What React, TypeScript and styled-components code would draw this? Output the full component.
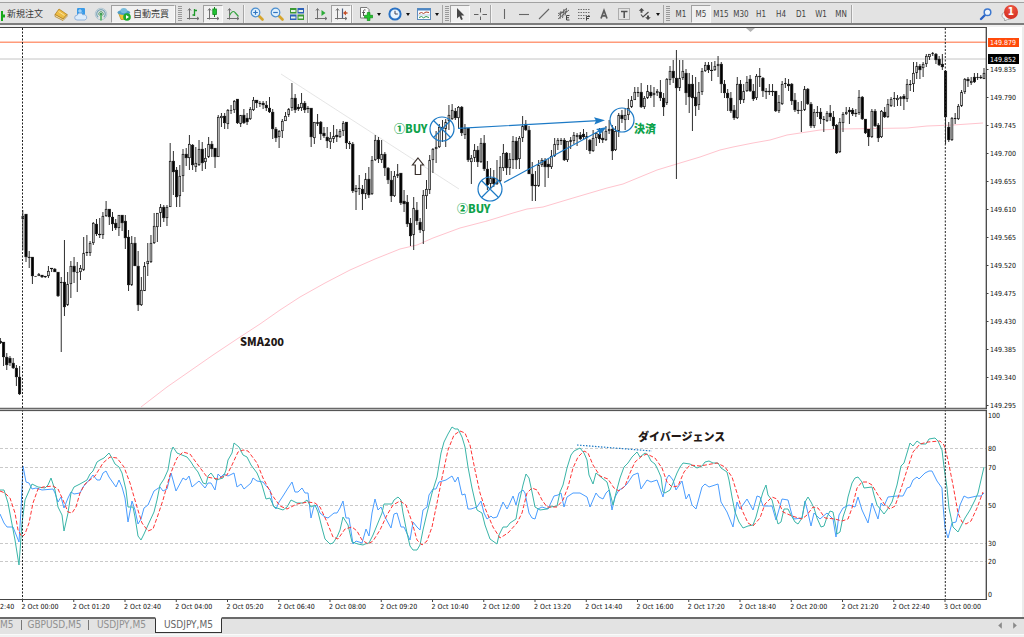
import React from "react";
import styled, { createGlobalStyle } from "styled-components";

const GlobalStyle = createGlobalStyle`
  *, *::before, *::after { box-sizing: border-box; }
  body {
    margin: 0;
    background: #f1f1f1;
    font-family: "DejaVu Sans Condensed", "DejaVu Sans", "Noto Sans CJK JP", sans-serif;
    color: #333;
  }
`;

const Window = styled.div`
  display: flex;
  flex-direction: column;
  min-width: 880px;
`;

const Toolbar = styled.header`
  display: flex;
  align-items: stretch;
  height: 25px;
  margin-bottom: 2px;
  border-top: 2px solid #ececec;
  border-bottom: 2px solid #7d7d7d;
  background: #e3e3e3;
  box-shadow: inset 0 1px 0 #a2a2a2;
  padding-top: 3px;
`;

const ToolButton = styled.button<{ $pressed?: boolean; $width?: number }>`
  display: flex;
  align-items: center;
  justify-content: center;
  gap: 2px;
  flex: none;
  width: ${(p) => p.$width ?? 20}px;
  padding: 0;
  border: 1px solid transparent;
  border-color: ${(p) => (p.$pressed ? "#a0a0a0 #fafafa #fafafa #a0a0a0" : "transparent")};
  background: ${(p) => (p.$pressed ? "#f1f1f1" : "transparent")};
  font-family: inherit;
  font-size: 8px;
  line-height: 10px;
  color: #444;
  svg { flex: none; display: block; }
`;

const MenuButton = styled(ToolButton)`
  width: 29px;
  gap: 4px;
`;

const FrameButton = styled(ToolButton)`
  padding-top: 2px;
`;

const TextButton = styled(ToolButton)`
  font-family: "Noto Sans CJK JP", sans-serif;
  font-size: 9px;
  line-height: 12px;
  white-space: nowrap;
  color: #3c3c3c;
`;

const OrderButton = styled(TextButton)`
  justify-content: flex-start;
`;

const Divider = styled.span`
  flex: none;
  width: 4px;
  border-left: 1px solid #a6a6a6;
  box-shadow: inset 1px 0 0 #f4f4f4;
`;

const Grip = styled.span`
  flex: none;
  width: 8px;
  border-left: 1px solid #a6a6a6;
  padding: 1px 1px 1px 2px;
  &::before {
    content: "";
    display: block;
    width: 4px;
    height: 100%;
    background: repeating-linear-gradient(#9a9a9a 0 1px, #e3e3e3 1px 2px);
  }
`;

const Caret = styled.span`
  border: 2px solid transparent;
  border-top: 3px solid #111;
  border-bottom-width: 0;
`;

const Spacer = styled.span`
  flex: 1;
`;

const AlertButton = styled(ToolButton)`
  position: relative;
  margin-right: 4px;
`;

const AlertCount = styled.span`
  position: absolute;
  top: -1px;
  right: 1px;
  width: 14px;
  height: 14px;
  border-radius: 50%;
  background: radial-gradient(circle at 50% 25%, #ee5a45, #cf2418);
  color: #fff;
  font-size: 10px;
  font-weight: 700;
  line-height: 14px;
  text-align: center;
`;

const ChartArea = styled.main`
  background: #fff;
  border-right: 2px solid #ececec;
`;

const ChartSvg = styled.svg`
  display: block;
  width: 100%;
  height: auto;
`;

const AxisText = styled.text<{ $light?: boolean }>`
  font-size: 7px;
  fill: ${(p) => (p.$light ? "#fff" : "#111")};
`;

const Note = styled.text<{ $green?: boolean }>`
  font-family: "Noto Sans CJK JP", sans-serif;
  font-size: 11px;
  font-weight: 900;
  fill: ${(p) => (p.$green ? "#0ea24b" : "#231815")};
`;

const TabBar = styled.nav`
  display: flex;
  height: 18px;
  border-bottom: 1px solid #fafafa;
  background: #e3e3e3;
`;

const Tab = styled.button<{ $active?: boolean; $short?: boolean }>`
  flex: none;
  width: ${(p) => (p.$short ? 21 : 67)}px;
  height: 16px;
  padding: 0 0 2px;
  border: 0 solid #333;
  border-top: 2px solid #6a6a6a;
  border-top-color: ${(p) => (p.$active ? "#fff" : "#6a6a6a")};
  border-width: ${(p) => (p.$active ? "2px 1px 1px 1px" : "2px 0 0 0")};
  background: ${(p) => (p.$active ? "#fff" : "transparent")};
  color: ${(p) => (p.$active ? "#666" : "#909090")};
  font-family: inherit;
  font-size: 10px;
  line-height: 10px;
  text-align: ${(p) => (p.$short ? "left" : "center")};
`;

const TabRule = styled.span`
  width: 1px;
  margin: 0 -1px 0 0;
  border-top: 2px solid #6a6a6a;
  &::before {
    content: "";
    display: block;
    width: 1px;
    height: 10px;
    margin-top: 1px;
    background: #777;
  }
`;

const TabFill = styled.span`
  flex: 1;
  border-top: 2px solid #6a6a6a;
`;

const ScrollButtons = styled.div`
  display: flex;
  align-items: center;
  gap: 9px;
  padding: 0 6px 2px 0;
  border-top: 2px solid #6a6a6a;
`;

const ScrollButton = styled.button<{ $right?: boolean }>`
  width: 6px;
  height: 8px;
  padding: 0;
  border: 0;
  background: #8a8a8a;
  clip-path: ${(p) =>
    p.$right ? "polygon(20% 10%, 80% 50%, 20% 90%)" : "polygon(80% 10%, 20% 50%, 80% 90%)"};
`;

/* ---------- icons ---------- */

type IconProps = { children: React.ReactNode; w?: number };
const Icon = ({ children, w = 14 }: IconProps) => (
  <svg width={w} height={14} viewBox={`0 0 ${w} 14`} fill="none" aria-hidden="true">
    {children}
  </svg>
);

const AXES = "M3.5 2v10.500M1 11.500h12M2 3.500l1.500-2 1.500 2M11 10l2 1.500-2 1.500";

const PlusIcon = () => (
  <Icon w={4}>
    <path d="M-2 7.500h2V4h2v3.500h2v3H2V14H0v-3.500h-2z" fill="#18a818" />
  </Icon>
);
const BookIcon = () => (
  <Icon>
    <path d="M1 7.500 5 2l8 5.500-4 4.500z" fill="#edbd45" stroke="#b88420" strokeWidth=".8" />
    <path d="M1 7.500 9 12l4-4.500v1.800L9 13.500 1 9.500z" fill="#f8e7b0" stroke="#a87618" strokeWidth=".7" />
    <path d="m4.500 4.500 6 4" stroke="#fae29a" />
  </Icon>
);
const CloudIcon = () => (
  <Icon>
    <rect x="3" y="1" width="8" height="8" rx="1" fill="#3a9be8" />
    <path d="M5 3h2v2H5zM8 5.500 6 8" stroke="#d8efff" strokeWidth=".8" />
    <path d="M3 13a2.400 2.400 0 0 1 .2-4.800 3 3 0 0 1 5.600-.4A2.700 2.700 0 1 1 11 13z" fill="#dcebfa" stroke="#7fa6d6" strokeWidth=".8" />
  </Icon>
);
const SignalIcon = () => (
  <Icon>
    <circle cx="7" cy="7" r="5.800" stroke="#b4c9d4" strokeWidth="1" />
    <path d="M4.200 10.200a4.300 4.300 0 1 1 5.600 0" stroke="#7aa6b8" strokeWidth="1.200" />
    <path d="M5.500 8.500a2.200 2.200 0 1 1 3 0" stroke="#53a070" />
    <circle cx="7" cy="7" r="1.200" fill="#3c9c50" />
    <path d="M7 8v5.500" stroke="#4fb25a" strokeWidth="1.600" />
  </Icon>
);
const ExpertIcon = () => (
  <Icon>
    <path d="M1.500 6h10.500l-2 6.500H4z" fill="#f2c433" stroke="#b98f1e" strokeWidth=".7" />
    <ellipse cx="6.800" cy="5.500" rx="6.300" ry="2.500" fill="#4f9fc9" />
    <ellipse cx="6.800" cy="3.600" rx="3.300" ry="2.600" fill="#79bddd" />
    <circle cx="10" cy="10" r="3.800" fill="#1eaa2c" />
    <path d="M9 8v4l3-2z" fill="#fff" />
  </Icon>
);
const BarsIcon = () => (
  <Icon>
    <path d={AXES} stroke="#707070" />
    <path d="M8.500 2v7M8.500 3.500H11M6.500 8h2" stroke="#1e9a2a" strokeWidth="1.300" />
  </Icon>
);
const CandlesIcon = () => (
  <Icon>
    <path d={AXES} stroke="#707070" />
    <path d="M8.500 0v10" stroke="#12801c" />
    <rect x="6.800" y="2" width="3.600" height="5.500" fill="#20c232" stroke="#128a1e" strokeWidth=".8" />
  </Icon>
);
const LineIcon = () => (
  <Icon>
    <path d={AXES} stroke="#707070" />
    <path d="M3.500 8.500c2-4 4-5 5.500-3l3.500 4" stroke="#3aa544" strokeWidth="1.200" />
  </Icon>
);
const ZoomIcon = ({ plus }: { plus?: boolean }) => (
  <Icon>
    <path d="m8.500 8.500 4 4" stroke="#d6a52e" strokeWidth="2.600" strokeLinecap="round" />
    <circle cx="5.500" cy="5.500" r="4.300" fill="#dff0fc" stroke="#4b8fd0" strokeWidth="1.200" />
    <path d={plus ? "M3.200 5.500h4.600M5.500 3.200v4.600" : "M3.200 5.500h4.600"} stroke="#2f74c0" strokeWidth="1.200" />
  </Icon>
);
const TilesIcon = () => (
  <Icon>
    <rect x="0" y="1" width="6.500" height="5.500" fill="#3c9a34" />
    <rect x="7.500" y="1" width="6.500" height="5.500" fill="#2d62b8" />
    <rect x="0" y="7.500" width="6.500" height="5.500" fill="#2d62b8" />
    <rect x="7.500" y="7.500" width="6.500" height="5.500" fill="#3c9a34" />
    <path d="M1 4h4.500M8.500 4H13M1 10.500h4.500M8.500 10.500H13" stroke="#e8f3e6" strokeWidth="1.800" />
  </Icon>
);
const ScrollIcon = () => (
  <Icon>
    <path d={AXES} stroke="#707070" />
    <path d="m7.500 3 4 3-4 3z" fill="#2cac38" />
  </Icon>
);
const ShiftIcon = () => (
  <Icon>
    <path d={AXES} stroke="#707070" />
    <path d="M8.500 1.500V11" stroke="#4d5f80" strokeWidth="1.200" />
    <path d="M13.500 6h-2" stroke="#c4512c" strokeWidth="1.500" />
    <path d="m9 6 3-2.500v5z" fill="#c4512c" />
  </Icon>
);
const IndicatorIcon = () => (
  <Icon>
    <path d="M1.500.500h6.500l2 2v8.500H1.500z" fill="#fafafa" stroke="#7a7a7a" />
    <path d="M6.500 3c-1.500-.5-2 0-2 1.500v4.500M3.200 5.500h2.800" stroke="#555" />
    <path d="M8.300 5.500h2.600v2.800h2.800v2.500h-2.800v2.900H8.300v-2.900H5.500V8.300h2.800z" fill="#22c52c" stroke="#128a1a" strokeWidth=".7" />
  </Icon>
);
const ClockIcon = () => (
  <Icon>
    <circle cx="7" cy="7" r="5.600" fill="#eaf4fd" stroke="#2a72c4" strokeWidth="2" />
    <path d="M7 3.800V7h2.800" stroke="#445" />
  </Icon>
);
const TemplateIcon = () => (
  <Icon>
    <rect x=".5" y="1.500" width="13" height="11" fill="#fbfdff" stroke="#5f8dbe" />
    <path d="M.5 2.500h13" stroke="#4d86c4" strokeWidth="2" />
    <path d="m2 6.500 2.500-1 2 1 2.500-1.500 3 .5" stroke="#b0452f" />
    <path d="M1 8h12" stroke="#9dbbd8" strokeWidth=".7" />
    <path d="m2 10.500 2.500-1 2 1.300L9 9.500l3 1" stroke="#35974a" />
  </Icon>
);
const CursorIcon = () => (
  <Icon>
    <path d="M4 1v10.500l2.400-2.300 1.700 3.800 1.700-.8L8.200 8.600h3.200z" fill="#474747" />
  </Icon>
);
const CrosshairIcon = () => (
  <Icon>
    <path d="M7.500 1v4.500M7.500 9.500V13M1 7.500h4.500M9.500 7.500H14" stroke="#606060" />
  </Icon>
);
const Stroke = ({ d }: { d: string }) => (
  <Icon>
    <path d={d} stroke="#666" strokeWidth="1.100" />
  </Icon>
);
const PitchforkIcon = () => (
  <Icon>
    <path d="m1 9 9-8M1 12l11-9M4 4l-1 8M7 2 5.500 11M9.500 2 8 8.500M1 6.500l9-2" stroke="#5c5c5c" strokeWidth=".9" />
    <path d="M12.500 8.500h-3v4.500h3M9.500 10.700h2.500" stroke="#444" />
  </Icon>
);
const FiboIcon = () => (
  <Icon>
    <path d="M1 2.500h12M1 5.500h12M1 8.500h12M1 11.500h7" stroke="#707070" strokeDasharray="1.500 1" />
    <path d="M9.500 13.500V9.500h3.500M9.500 11.500h2.500" stroke="#444" />
  </Icon>
);
const TextIcon = () => (
  <Icon>
    <path d="m4 11.500 3-8 3 8M5.200 8.800h3.600" stroke="#5c5c5c" strokeWidth="1.700" />
  </Icon>
);
const LabelIcon = () => (
  <Icon>
    <rect x="1.500" y="1.500" width="11" height="11" stroke="#777" strokeDasharray="1 1" />
    <path d="M4 4.500h6.500M7.200 4.500V11" stroke="#505050" strokeWidth="1.500" />
  </Icon>
);
const ArrowsIcon = () => (
  <Icon>
    <path d="m3.500 1 2.800 2.700H4.500v2H2.500v-2H.8zM10 13 7.200 10.300H9V8.500h2v1.800h1.800z" fill="#4a4a4a" />
    <path d="m3 7.500 2 2.500L10.500 5" stroke="#4a4a4a" strokeWidth="1.200" />
  </Icon>
);
const SearchIcon = () => (
  <Icon>
    <path d="M6 8 2 12" stroke="#2a62c4" strokeWidth="2.400" strokeLinecap="round" />
    <circle cx="8.500" cy="5.300" r="3.300" fill="#eef5fd" stroke="#3c78d0" strokeWidth="1.500" />
  </Icon>
);
const BubbleIcon = () => (
  <Icon>
    <path d="M1 8.500c0-2.500 2-3.500 5-3.500s6 1.500 6 4-2.500 3.500-5.500 3.500L3.500 14l.2-2.200C2 11.200 1 10 1 8.500z" fill="#f4f4f4" stroke="#a8a8a8" />
  </Icon>
);

/* ---------- chart data ---------- */

// One candle per five minutes: high, body top, body bottom, low; "d" marks a falling candle.
const FIRST_CANDLE = -7;
const CANDLES = `
338 341 343 344d|342 342 357 366d|353 357 365 370d|356 358 363 366d|358 363 368 369d|365 368 377 386d|366 377 394 395d|
210 216 219 250|214 214 257 262d|251 257 257 268d|257 257 276 284d|276 276 276 276|273 274 276 276|275 275 277 278d|276 276 277 278d|266 271 276 278|268 268 269 272d|
268 269 272 272d|272 272 296 297d|277 282 283 352|240 282 307 316d|272 284 305 306|261 266 284 298|257 266 272 283d|262 272 272 292|265 268 272 280|237 253 270 271|
235 252 253 256|241 243 253 256|222 223 243 245|219 224 234 236d|218 234 235 238d|212 216 235 239|201 209 216 217|209 209 217 225d|212 217 224 231d|219 223 228 230d|
215 215 228 236|215 215 223 231d|215 221 238 249d|230 237 285 291d|236 243 285 286|237 243 266 266d|251 266 305 311d|277 290 305 306|262 266 291 291|243 261 264 276|
235 243 262 263|213 226 243 244|213 213 227 242|204 207 213 227|205 207 218 222d|205 207 218 226|143 161 207 207|151 161 172 195d|167 170 197 207d|165 176 196 207|
149 154 176 192|148 154 158 166d|135 144 158 170|144 145 165 170d|147 163 167 172|140 149 165 166|142 149 163 171d|148 158 162 169|137 144 157 158|141 144 149 157d|
148 148 157 168d|115 117 157 157|113 116 118 127|113 116 123 129d|109 110 124 129|105 110 110 114|100 101 110 113|99 99 123 124d|115 115 124 127|109 115 123 124d|
113 118 122 125d|107 109 119 120|97 100 110 111|100 100 103 108d|101 103 104 107|101 103 105 109d|101 105 108 111d|97 108 112 113d|109 112 129 139d|127 129 138 142d|
130 131 137 148|119 121 131 138|112 116 121 121|108 109 115 117|83 98 108 111|94 98 110 113d|104 107 109 111d|93 103 108 111|101 103 110 113d|106 108 109 113d|
108 108 137 147d|122 122 138 144|114 122 124 126|121 122 134 140d|127 133 136 138d|127 137 141 148d|132 138 142 149|125 136 139 143|129 135 137 142d|129 131 137 138|
121 123 131 136|122 122 143 149d|141 143 144 149d|142 144 191 193d|185 188 192 210|175 188 189 195|185 189 194 210d|173 179 194 199|167 179 195 198d|156 160 194 195|
135 140 160 161|137 140 159 163d|140 154 160 163|152 154 168 176d|167 168 180 184d|171 180 196 202d|171 176 196 197|164 174 176 178|173 173 203 205d|190 201 204 212d|
195 202 224 227d|218 223 236 246d|197 208 235 250|202 210 221 225d|218 222 230 233d|190 195 231 244|180 189 196 209|155 160 190 194|148 149 160 173|131 147 149 163|
124 127 147 148|120 127 129 142|119 122 129 147|105 115 121 130|104 110 119 120|108 111 118 120d|106 107 118 128|106 107 133 136d|124 128 135 139|128 128 160 162d|
155 158 162 184|144 150 158 162|146 150 162 167d|138 143 162 163|135 143 169 171d|161 169 185 190d|168 178 184 189|170 178 184 187d|160 182 184 185|156 167 181 182|
144 153 168 171|152 153 168 175d|153 159 168 175|136 141 160 169|137 141 160 169d|136 138 159 169|116 126 138 142|120 124 130 131d|126 130 174 174d|162 174 186 201d|
171 185 186 201d|160 165 186 187|158 160 165 167|158 160 167 187d|159 164 167 178d|150 156 167 169|138 144 156 157|138 140 145 150|138 140 141 145|138 140 160 161d|
141 141 160 162|137 140 142 149|132 135 141 144|133 135 137 146|132 135 139 140d|129 134 137 139d|132 136 138 150|139 140 151 154d|130 138 151 152|132 133 138 146|
128 134 139 143d|130 138 140 143d|126 131 140 141|120 129 131 134|125 129 151 160d|126 131 150 151|113 115 131 137|110 115 119 123d|108 115 120 130|99 108 115 120|
96 100 107 108|87 92 100 100|87 92 93 97|83 92 107 108d|96 98 107 109|85 91 98 99|85 92 96 98d|87 93 95 107|89 91 93 96|80 92 98 101d|
93 98 107 116d|78 79 103 105|66 71 80 85|60 71 78 83d|50 78 88 179d|60 78 88 91|60 71 78 80|69 73 93 105d|73 84 97 113d|75 84 98 131d|
77 97 106 116d|82 92 105 110|68 71 92 95|62 65 71 72|62 65 70 73d|62 70 70 81d|61 66 70 71|56 64 66 77|62 64 84 93d|80 84 93 98d|
89 93 98 111d|92 98 111 113d|105 110 118 120d|77 84 118 119|80 84 100 104d|84 91 100 103|76 82 91 92|75 79 91 92d|84 91 99 101d|74 76 98 100|
68 76 77 87d|77 78 91 97d|88 91 92 99d|84 91 92 95d|84 91 92 96d|91 91 111 112d|95 102 111 113|81 84 104 105|78 83 84 88|79 84 86 91d|
83 84 101 105d|93 100 110 112d|102 110 110 114d|101 110 110 132|86 89 110 111|88 89 104 105d|102 104 126 128d|109 112 126 128|106 112 113 117|108 112 119 124d|
116 119 120 132|111 113 121 122|105 113 117 121d|111 117 126 129d|124 125 153 154d|118 122 152 153|112 114 123 132|107 112 114 115|107 110 112 124d|108 110 114 116d|
109 113 114 117d|90 97 113 115|96 97 119 120d|119 119 133 134d|129 129 137 146d|109 111 137 138|109 111 126 127d|123 125 138 142d|110 111 137 138|107 112 117 118d|
99 104 117 118|97 99 106 107|92 98 99 107|95 98 100 106|96 97 99 106|94 96 99 110d|79 84 99 102|80 84 85 91|62 73 84 92|62 66 73 79|
64 66 70 79d|62 64 68 77|54 56 64 67|54 54 57 60|52 53 54 56|53 54 60 64d|56 59 65 66d|54 64 67 70d|70 71 117 144d|122 127 140 142d|
117 118 140 141|113 118 119 124|104 106 119 120|90 92 106 107|78 79 92 94|77 79 81 87d|77 81 83 85|73 77 82 83d|73 77 78 80|75 77 78 79d|68 73 79 79`
  .trim()
  .split("|")
  .map((entry, n) => {
    const text = entry.trim();
    const [high, top, bottom, low] = text.replace("d", "").split(" ").map(Number);
    return { x: 22.800 + (n + FIRST_CANDLE) * 3.204, high, top, bottom, low, falling: text.endsWith("d") };
  });

const SMA200 =
  "141,407 167,387 190,371 213,355 237,339 260,324 280,310 300,297 325,283 350,270 375,259 400,249 417,245 433,238 460,228 487,221 513,213 527,209 543,207 573,198 607,188 623,184 657,170 680,163 700,157 720,150 733,147 753,143 770,140 787,135 820,130 840,129 907,128 927,126 953,125 983,123";

const MAIN_LINE =
  "0,490 4,490 8,503 15,540 19,565 22,523 25,500 32,484 38,487 45,488 48,485 51,478 55,490 58,507 62,515 64,531 68,513 71,493 74,487 80,484 87,480 90,474 93,471 97,462 100,460 104,458 109,453 112,458 115,464 119,467 122,473 126,490 128,507 133,507 135,517 138,536 141,540 144,534 148,525 154,512 157,500 160,485 164,479 168,470 171,452 173,447 177,453 182,455 187,457 191,462 194,467 198,472 203,483 206,484 208,476 211,473 216,480 223,478 226,470 228,460 232,453 234,443 239,447 243,455 247,457 251,465 257,473 262,485 266,499 270,498 274,507 283,510 287,507 291,500 297,503 303,503 307,500 311,507 315,505 318,512 322,528 325,539 330,544 333,543 337,537 340,530 343,517 348,525 352,542 358,544 363,545 365,544 369,543 373,535 382,513 384,504 392,504 394,500 398,497 401,500 403,513 407,533 410,546 413,550 417,550 420,545 423,530 427,513 432,493 437,477 441,453 444,442 448,434 452,427 455,429 458,429 462,437 465,447 468,467 472,488 477,510 482,513 485,525 490,539 497,544 499,535 503,527 507,527 510,523 516,519 518,507 523,485 526,474 529,478 532,492 535,507 540,510 547,509 550,507 557,506 560,492 563,485 567,468 571,455 574,451 580,448 584,453 587,460 589,475 593,484 596,473 602,478 607,482 610,493 613,505 616,493 620,478 624,467 628,463 632,457 637,452 640,457 645,453 648,455 651,461 655,464 658,470 661,477 663,492 665,493 670,490 673,483 677,473 680,467 683,463 690,464 697,468 702,466 705,462 709,461 713,463 718,463 721,468 727,472 729,480 732,497 735,512 739,522 743,528 748,526 753,525 756,517 760,502 763,492 766,485 768,495 772,500 775,512 778,524 781,522 784,509 788,509 791,515 795,522 798,524 802,518 805,502 808,497 811,502 814,508 817,518 821,527 824,526 827,517 830,511 833,512 835,522 837,534 840,532 843,517 846,508 848,497 852,483 855,478 858,477 862,482 864,488 872,487 874,495 877,505 881,510 884,514 887,510 892,502 897,485 901,466 904,463 907,453 910,443 913,446 917,441 921,444 926,444 929,439 935,438 938,441 942,450 944,467 947,488 949,508 953,527 958,532 961,526 965,518 970,510 975,500 978,493 981,480 984,467";

const SIGNAL_LINE =
  "0,491 5,493 10,498 15,513 18,530 22,537 25,534 29,523 33,503 38,489 43,487 53,486 58,489 63,500 68,512 72,513 76,507 80,493 85,484 95,476 103,463 110,457 117,458 124,467 130,483 137,507 142,523 148,531 153,529 158,515 163,500 170,475 177,458 183,452 190,454 198,465 207,477 217,479 227,475 232,465 238,452 243,450 248,451 257,463 263,478 272,495 280,506 287,509 297,504 308,502 315,503 320,507 327,522 333,537 338,539 345,529 352,527 357,531 362,540 368,544 373,541 380,530 387,515 393,505 400,501 406,505 412,522 417,540 422,545 427,541 432,527 437,503 443,473 448,450 454,435 460,431 465,433 470,445 475,470 480,493 485,508 493,527 500,538 508,533 517,523 522,513 527,493 532,488 537,490 542,500 547,507 557,507 563,500 568,487 573,468 578,457 584,451 588,453 593,465 600,476 608,479 614,488 619,491 625,486 630,473 635,462 642,456 647,454 655,458 662,468 667,482 672,487 678,486 684,472 690,465 700,466 717,463 725,467 732,477 737,493 742,510 748,523 753,526 760,518 765,504 772,497 777,499 783,512 792,516 802,519 807,515 813,507 818,508 825,518 835,519 842,521 848,519 852,508 857,488 862,482 867,482 872,485 878,495 885,505 890,509 895,506 900,492 907,470 913,452 920,444 928,442 940,441 944,445 948,460 953,485 958,513 962,522 966,524 971,521 977,508 983,492";

const RSI_LINE =
  "0,514 4,523 7,527 13,527 17,537 19,542 21,510 23,466 26,482 29,483 32,489 36,488 42,490 53,489 55,493 58,502 61,497 64,508 68,498 71,492 74,494 80,493 83,487 90,479 93,475 97,480 100,480 103,473 106,471 109,477 116,487 119,480 122,487 125,498 128,522 132,501 135,510 138,524 141,519 144,508 148,505 154,491 160,487 163,491 167,489 171,473 173,480 176,491 183,478 186,480 189,476 192,487 199,481 205,488 208,483 211,483 215,490 218,474 221,477 224,474 228,476 234,473 237,487 241,484 244,489 251,483 253,478 257,481 263,482 267,487 270,490 273,505 276,509 279,502 283,496 288,488 292,482 295,492 298,492 302,488 305,493 308,493 311,518 314,506 317,505 320,513 325,517 328,518 334,513 337,513 340,508 343,501 346,518 349,518 353,544 356,541 362,543 366,529 369,536 372,513 375,499 378,510 381,507 385,517 391,528 394,514 397,513 401,527 404,527 410,540 413,522 417,527 420,530 423,510 427,507 429,495 433,489 436,489 439,482 446,480 452,476 455,482 458,477 462,495 465,494 468,509 471,509 477,507 481,501 484,513 487,519 491,516 493,518 497,517 503,502 507,509 509,505 513,496 516,505 519,493 523,490 525,493 529,513 532,518 535,519 538,509 542,507 548,509 554,496 558,495 561,493 564,507 567,497 573,493 580,493 587,497 590,507 596,493 599,497 603,499 606,493 609,490 612,510 615,497 619,490 623,488 627,484 633,475 638,473 641,489 647,480 651,482 657,480 663,497 667,478 669,475 673,480 676,490 682,481 686,499 689,494 692,505 696,509 699,498 702,487 705,484 709,487 718,484 721,502 727,512 733,527 737,502 740,509 747,499 753,510 757,496 760,497 763,506 772,506 776,520 782,499 788,500 792,515 794,519 802,518 805,501 808,513 811,526 814,513 820,519 827,513 833,519 836,537 839,515 843,508 849,505 855,507 858,497 862,510 868,523 872,503 878,519 881,503 884,506 888,497 897,496 903,496 907,488 910,487 913,480 917,477 919,479 925,473 929,471 932,471 937,481 942,488 943,505 945,528 948,538 952,523 956,522 960,505 964,496 968,498 977,496 981,496 984,493";

const PRICES = Array.from({ length: 13 }, (_, n) => ({
  label: (149.835 - n * 0.045).toFixed(3),
  y: 70 + n * 28,
}));

const LEVELS = [
  { label: "80", y: 448 },
  { label: "70", y: 467 },
  { label: "50", y: 505 },
  { label: "30", y: 543 },
  { label: "20", y: 561 },
];

const TIMES = [
  "2 Oct 00:00", "2 Oct 01:20", "2 Oct 02:40", "2 Oct 04:00", "2 Oct 05:20", "2 Oct 06:40",
  "2 Oct 08:00", "2 Oct 09:20", "2 Oct 10:40", "2 Oct 12:00", "2 Oct 13:20", "2 Oct 14:40",
  "2 Oct 16:00", "2 Oct 17:20", "2 Oct 18:40", "2 Oct 20:00", "2 Oct 21:20", "2 Oct 22:40",
  "3 Oct 00:00",
].map((label, n) => ({ label, x: 22.500 + n * 51.250 }));

const MARKS = [
  { x: 442, y: 129, crossed: true },
  { x: 490, y: 189, crossed: true },
  { x: 622, y: 120, crossed: false },
];

const Candles = () => (
  <g stroke="#161616">
    {CANDLES.map((c, n) => (
      <g key={n}>
        <path d={`M${c.x} ${c.high}V${c.low}`} strokeWidth=".9" />
        <rect
          x={c.x - (c.falling ? 1.100 : 0.900)}
          y={c.top + 0.300}
          width={c.falling ? 2.200 : 1.800}
          height={Math.max(c.bottom - c.top - 0.600, 0.300)}
          fill={c.falling ? "#000" : "#d8d8d8"}
          strokeWidth={c.falling ? 0.800 : 0.700}
        />
      </g>
    ))}
  </g>
);

const Chart = () => (
  <ChartSvg viewBox="0 27 1022 590" role="img" aria-label="USDJPY M5">
    <path d="M0 42.200H987" stroke="#ff9b7a" strokeWidth="1.500" />
    <path d="M0 59H987" stroke="#c4c4c4" />
    <path d="M746 28h9l-4.500 4z" fill="#b4b4b4" />

    <g stroke="#c9c9c9" strokeDasharray="3 2">
      {LEVELS.map((l) => (
        <path key={l.label} d={`M0 ${l.y + 0.500}H986`} />
      ))}
    </g>

    <polyline points={SMA200} fill="none" stroke="#ffc4ce" />
    <path d="M281 74 459 189" stroke="#dedede" strokeWidth=".8" />
    <Candles />

    <g fill="none" strokeLinejoin="round">
      <polyline points={RSI_LINE} stroke="#4a9dff" />
      <polyline points={MAIN_LINE} stroke="#3ab5a8" />
      <polyline points={SIGNAL_LINE} stroke="#ff3535" strokeDasharray="4 2" />
    </g>

    <g stroke="#222" strokeDasharray="2 1.500">
      <path d="M22.500 28V599M945.300 28V599" />
    </g>

    <g stroke="#444">
      <path d="M0 27.500H987M0 408.300H987M0 410.600H987M0 599.500H987" />
      <path d="M986.300 27V600" strokeWidth="1.300" />
      <path d="M0 409.500H987" stroke="#bbb" />
      {PRICES.map((p) => (
        <path key={p.label} d={`M986 ${p.y - 0.500}h2.500`} />
      ))}
      {TIMES.map((t) => (
        <path key={t.label} d={`M${t.x} 599v3`} />
      ))}
    </g>

    {PRICES.map((p) => (
      <AxisText key={p.label} x="990" y={p.y + 2}>{p.label}</AxisText>
    ))}
    <rect x="988" y="38" width="31" height="9" fill="#ff4a0a" />
    <AxisText $light x="990" y="45">149.879</AxisText>
    <rect x="988" y="54" width="31" height="10" fill="#000" />
    <AxisText $light x="990" y="62">149.852</AxisText>

    <AxisText x="988" y="418">100</AxisText>
    {LEVELS.map((l) => (
      <AxisText key={l.label} x="988" y={l.y + 3}>{l.label}</AxisText>
    ))}
    <AxisText x="988" y="597">0</AxisText>

    <AxisText x="0" y="609">2:40</AxisText>
    {TIMES.map((t) => (
      <AxisText key={t.label} x={t.x - 1} y="609">{t.label}</AxisText>
    ))}

    <g stroke="#1c7ac6" strokeWidth="1.200" fill="none">
      {MARKS.map((m) => (
        <g key={m.x}>
          <circle cx={m.x} cy={m.y} r="12" />
          {m.crossed && (
            <path d={`M${m.x - 8.500} ${m.y - 8.500}l17 17M${m.x + 8.500} ${m.y - 8.500}l-17 17`} />
          )}
        </g>
      ))}
      <path d="M458 128.300 598 120.700M504 182.500 600 130.500" />
      <path d="M577 445 652 451" strokeDasharray="1.500 1.500" />
    </g>
    <path d="M605 120.300 594 117.200l2 3.600-1.600 3.600zM607 127l-11 2 3.200 2.400-.3 4z" fill="#1c7ac6" />
    <path d="m418 158 5.500 7h-2.800v9.500h-5.400V165h-2.800z" fill="#fff" stroke="#3a302c" strokeWidth="1.200" />

    <Note $green x="394" y="133">①BUY</Note>
    <Note $green x="457" y="213">②BUY</Note>
    <Note $green x="634" y="133">決済</Note>
    <Note x="240" y="346">SMA200</Note>
    <Note x="638" y="441">ダイバージェンス</Note>
  </ChartSvg>
);

const TIMEFRAMES = ["M1", "M5", "M15", "M30", "H1", "H4", "D1", "W1", "MN"];

export default function App() {
  return (
    <Window>
      <GlobalStyle />
      <Toolbar>
        <OrderButton $width={51}>
          <PlusIcon />
          新規注文
        </OrderButton>
        <ToolButton aria-label="Market"><BookIcon /></ToolButton>
        <ToolButton aria-label="Cloud"><CloudIcon /></ToolButton>
        <ToolButton aria-label="Signals"><SignalIcon /></ToolButton>
        <TextButton $pressed $width={64}>
          <ExpertIcon />
          自動売買
        </TextButton>
        <Grip />
        <ToolButton aria-label="Bar chart"><BarsIcon /></ToolButton>
        <ToolButton $pressed aria-label="Candlesticks"><CandlesIcon /></ToolButton>
        <ToolButton aria-label="Line chart"><LineIcon /></ToolButton>
        <Divider />
        <ToolButton aria-label="Zoom in"><ZoomIcon plus /></ToolButton>
        <ToolButton aria-label="Zoom out"><ZoomIcon /></ToolButton>
        <ToolButton aria-label="Tile windows"><TilesIcon /></ToolButton>
        <Divider />
        <ToolButton aria-label="Auto scroll"><ScrollIcon /></ToolButton>
        <ToolButton $pressed aria-label="Chart shift"><ShiftIcon /></ToolButton>
        <Divider />
        <MenuButton aria-label="Indicators"><IndicatorIcon /><Caret /></MenuButton>
        <MenuButton aria-label="Periods"><ClockIcon /><Caret /></MenuButton>
        <MenuButton aria-label="Templates"><TemplateIcon /><Caret /></MenuButton>
        <Grip />
        <ToolButton $pressed aria-label="Cursor"><CursorIcon /></ToolButton>
        <ToolButton aria-label="Crosshair"><CrosshairIcon /></ToolButton>
        <Divider />
        <ToolButton aria-label="Vertical line"><Stroke d="M7.500 2v10" /></ToolButton>
        <ToolButton aria-label="Horizontal line"><Stroke d="M2 7.500h10" /></ToolButton>
        <ToolButton aria-label="Trend line"><Stroke d="m2 12 10-10" /></ToolButton>
        <ToolButton aria-label="Channel"><PitchforkIcon /></ToolButton>
        <ToolButton aria-label="Fibonacci"><FiboIcon /></ToolButton>
        <ToolButton aria-label="Text"><TextIcon /></ToolButton>
        <ToolButton aria-label="Text label"><LabelIcon /></ToolButton>
        <MenuButton aria-label="Arrows"><ArrowsIcon /><Caret /></MenuButton>
        <Grip />
        {TIMEFRAMES.map((t) => (
          <FrameButton key={t} $pressed={t === "M5"}>{t}</FrameButton>
        ))}
        <Divider />
        <Spacer />
        <ToolButton aria-label="Search"><SearchIcon /></ToolButton>
        <AlertButton $width={24} aria-label="Notifications">
          <BubbleIcon />
          <AlertCount>1</AlertCount>
        </AlertButton>
      </Toolbar>
      <ChartArea>
        <Chart />
      </ChartArea>
      <TabBar>
        <Tab $short>M5</Tab>
        <TabRule />
        <Tab>GBPUSD,M5</Tab>
        <TabRule />
        <Tab>USDJPY,M5</Tab>
        <Tab $active>USDJPY,M5</Tab>
        <TabFill />
        <ScrollButtons>
          <ScrollButton aria-label="Scroll left" />
          <ScrollButton $right aria-label="Scroll right" />
        </ScrollButtons>
      </TabBar>
    </Window>
  );
}
